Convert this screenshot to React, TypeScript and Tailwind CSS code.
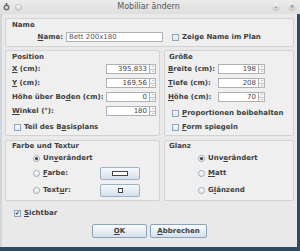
import React from 'react'

const U = ({ children }: { children: React.ReactNode }) => <span className="underline underline-offset-1">{children}</span>

function Field({ value, w, spin = true }: { value: string; w: string; spin?: boolean }) {
  return (
    <div className="flex h-[10px] items-stretch">
      <div className={`${w} flex items-center justify-end border border-[#b0b0b0] bg-white pr-[2px] text-[7px] font-normal leading-none text-[#444]`}>
        {value}
      </div>
      {spin && (
        <div className="flex w-[6px] flex-col border border-l-0 border-[#b4b4b4] bg-[#f4f4f4]">
          <div className="flex flex-1 items-center justify-center border-b border-[#c8c8c8]">
            <div className="h-0 w-0 border-x-[1.5px] border-b-[1.5px] border-x-transparent border-b-[#999]" />
          </div>
          <div className="flex flex-1 items-center justify-center">
            <div className="h-0 w-0 border-x-[1.5px] border-t-[1.5px] border-x-transparent border-t-[#999]" />
          </div>
        </div>
      )}
    </div>
  )
}

function Check({ on = false }: { on?: boolean }) {
  return (
    <div className="flex h-[7px] w-[7px] items-center justify-center border border-[#8fa6bf] bg-gradient-to-b from-[#f7fbff] to-[#dce8f4] text-[6px] leading-none text-[#333]">
      {on ? '✔' : ''}
    </div>
  )
}

function Radio({ on = false }: { on?: boolean }) {
  return (
    <div className="flex h-[7px] w-[7px] items-center justify-center rounded-full border border-[#9aa9b8] bg-gradient-to-b from-white to-[#e2e8ee]">
      {on && <div className="h-[3px] w-[3px] rounded-full bg-[#333]" />}
    </div>
  )
}

function Row({ label, children, w }: { label: React.ReactNode; children: React.ReactNode; w: string }) {
  return (
    <div className="flex h-[14px] items-center">
      <div className={w}>{label}</div>
      {children}
    </div>
  )
}

export default function App() {
  return (
    <div className="flex h-[251px] w-[300px] flex-col bg-[#e9e9e9] font-['DejaVu_Sans',sans-serif] text-[7px] font-bold text-[#404040]">
      {/* Titelleiste */}
      <div className="relative flex h-[14px] items-center justify-center bg-gradient-to-b from-[#ececec] to-[#dedede] pr-[3px]">
        <div className="absolute left-[2px] top-[3px] flex items-center gap-[4px]">
          <svg width="9" height="9" viewBox="0 0 9 9">
            <circle cx="4.5" cy="4.5" r="3" fill="#777" />
            <circle cx="4.5" cy="4.5" r="1.4" fill="#ddd" />
            <rect x="3.8" y="0" width="1.4" height="3" fill="#555" />
          </svg>
          <div className="h-[7px] w-[7px] rounded-full border border-[#bbb] bg-gradient-to-b from-white to-[#ccc]" />
        </div>
        <span className="text-[8px] font-normal text-[#555]">Mobiliar ändern</span>
        <div className="absolute right-[4px] top-[3px] flex items-center gap-[8px]">
          <div className="flex h-[8px] w-[8px] items-center justify-center rounded-full bg-gradient-to-b from-[#f4f4f4] to-[#c6c6c6] text-[5px] text-[#666]">⌄</div>
          <div className="flex h-[8px] w-[8px] items-center justify-center rounded-full bg-gradient-to-b from-[#f4f4f4] to-[#c6c6c6] text-[5px] text-[#555]">✕</div>
        </div>
      </div>

      <div className="flex flex-1 border-r-[3px] border-l-[2px] border-r-[#2f4d68] border-l-[#cfd6dc]">
        <div className="flex flex-1 flex-col px-[3px] pt-[4px]">
          {/* Name */}
          <div className="h-[29px] rounded-[2px] border border-[#d2d2d2] bg-[#efefef] px-[6px] pt-[1px]">
            <div className="h-[10px] leading-[10px]">Name</div>
            <div className="flex h-[14px] items-center">
              <div className="w-[54px] pr-[3px] text-right"><U>N</U>ame:</div>
              <div className="flex h-[10px] w-[97px] items-center border border-[#b0b0b0] bg-white pl-[2px] text-[7px] font-normal text-[#555]">Bett 200x180</div>
              <div className="ml-[9px] flex items-center gap-[3px]">
                <Check />
                <span>Zeige Name im Plan</span>
              </div>
            </div>
          </div>

          {/* Position / Größe */}
          <div className="mt-[3px] flex gap-[4px]">
            <div className="h-[86px] w-[155px] rounded-[2px] border border-[#d2d2d2] bg-[#efefef] pl-[6px] pt-[1px]">
              <div className="h-[10px] leading-[10px]">Position</div>
              <Row w="w-[94px]" label={<><U>X</U> (cm):</>}><Field value="395,833" w="w-[44px]" /></Row>
              <Row w="w-[94px]" label={<><U>Y</U> (cm):</>}><Field value="169,56" w="w-[44px]" /></Row>
              <Row w="w-[94px]" label={<>Höhe über Bo<U>d</U>en (cm):</>}><Field value="0" w="w-[44px]" /></Row>
              <Row w="w-[94px]" label={<><U>W</U>inkel (°):</>}><Field value="180" w="w-[44px]" /></Row>
              <div className="mt-[2px] flex h-[14px] items-center gap-[3px] pl-[2px]">
                <Check />
                <span>Teil des B<U>a</U>sisplans</span>
              </div>
            </div>
            <div className="h-[86px] w-[130px] rounded-[2px] border border-[#d2d2d2] bg-[#efefef] pl-[3px] pt-[1px]">
              <div className="h-[10px] pl-[1px] leading-[10px]">Größe</div>
              <Row w="w-[50px]" label={<><U>B</U>reite (cm):</>}><Field value="198" w="w-[41px]" /></Row>
              <Row w="w-[50px]" label={<><U>T</U>iefe (cm):</>}><Field value="208" w="w-[41px]" /></Row>
              <Row w="w-[50px]" label={<><U>H</U>öhe (cm):</>}><Field value="70" w="w-[41px]" /></Row>
              <div className="flex h-[16px] items-center gap-[3px] pl-[4px] pt-[2px]">
                <Check />
                <span><U>P</U>roportionen beibehalten</span>
              </div>
              <div className="flex h-[14px] items-center gap-[3px] pl-[4px]">
                <Check />
                <span><U>F</U>orm spiegeln</span>
              </div>
            </div>
          </div>

          {/* Farbe / Glanz */}
          <div className="mt-[4px] flex gap-[4px]">
            <div className="h-[61px] w-[155px] rounded-[2px] border border-[#d2d2d2] bg-[#efefef] pl-[6px]">
              <div className="h-[10px] leading-[10px]">Farbe und Textur</div>
              <div className="flex h-[14px] items-center gap-[3px] pl-[21px]">
                <Radio on />
                <span>Un<U>v</U>erändert</span>
              </div>
              <div className="flex h-[17px] items-center pl-[21px]">
                <Radio />
                <span className="ml-[3px] w-[57px]"><U>F</U>arbe:</span>
                <div className="flex h-[13px] w-[40px] items-center justify-center rounded-[2px] border border-[#9fb0c2] bg-gradient-to-b from-[#f6f9fc] to-[#d5e0ec]">
                  <div className="h-[5px] w-[16px] border border-[#444] bg-white" />
                </div>
              </div>
              <div className="flex h-[17px] items-center pl-[21px]">
                <Radio />
                <span className="ml-[3px] w-[57px]">Text<U>u</U>r:</span>
                <div className="flex h-[13px] w-[40px] items-center justify-center rounded-[2px] border border-[#9fb0c2] bg-gradient-to-b from-[#f6f9fc] to-[#d5e0ec]">
                  <div className="h-[5px] w-[5px] border border-[#444] bg-white" />
                </div>
              </div>
            </div>
            <div className="h-[61px] w-[130px] rounded-[2px] border border-[#d2d2d2] bg-[#efefef] pl-[4px]">
              <div className="h-[10px] leading-[10px]">Glanz</div>
              <div className="flex h-[14px] items-center gap-[3px] pl-[29px]">
                <Radio on />
                <span>Unv<U>e</U>rändert</span>
              </div>
              <div className="flex h-[17px] items-center gap-[3px] pl-[29px]">
                <Radio />
                <span><U>M</U>att</span>
              </div>
              <div className="flex h-[17px] items-center gap-[3px] pl-[29px]">
                <Radio />
                <span>G<U>l</U>änzend</span>
              </div>
            </div>
          </div>

          {/* Sichtbar */}
          <div className="mt-[5px] flex h-[14px] items-center gap-[3px] pl-[9px]">
            <Check on />
            <span><U>S</U>ichtbar</span>
          </div>

          {/* Buttons */}
          <div className="mt-[4px] flex gap-[3px] pl-[87px]">
            <div className="flex h-[14px] w-[55px] items-center justify-center rounded-[2px] border border-[#8ea2b6] bg-gradient-to-b from-[#fafcfe] to-[#d6e1ec]">
              <span><U>O</U>K</span>
            </div>
            <div className="flex h-[14px] w-[57px] items-center justify-center rounded-[2px] border border-[#8ea2b6] bg-gradient-to-b from-[#fafcfe] to-[#d6e1ec]">
              <span><U>A</U>bbrechen</span>
            </div>
          </div>
        </div>
      </div>
      <div className="h-[4px] bg-[#2d4b63]" />
    </div>
  )
}
